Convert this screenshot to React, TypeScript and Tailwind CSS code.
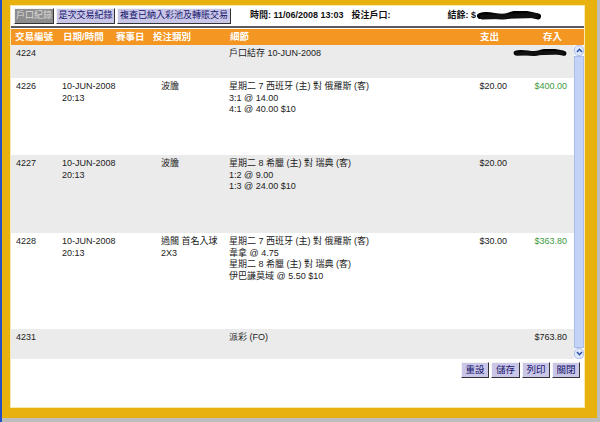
import React from "react";

const font = "font-['Liberation_Sans','Noto_Sans_CJK_TC',sans-serif]";

type Row = {
  id: string;
  date?: string[];
  type?: string[];
  details: string[];
  out?: string;
  inn?: React.ReactNode;
  green?: boolean;
  h: string;
  bg: string;
};

const Scribble: React.FC<{ w: number; h: number }> = ({ w, h }) => (
  <svg width={w} height={h} viewBox={`0 0 ${w} ${h}`}>
    <path
      d={`M3 ${h / 2} C ${w * 0.2} ${h * 0.15}, ${w * 0.35} ${h * 0.85}, ${w * 0.5} ${h * 0.45} S ${w * 0.8} ${h * 0.3}, ${w - 3} ${h * 0.55}`}
      stroke="#000"
      strokeWidth={h * 0.6}
      strokeLinecap="round"
      fill="none"
    />
    <path
      d={`M${w * 0.08} ${h * 0.6} L ${w * 0.92} ${h * 0.45}`}
      stroke="#111"
      strokeWidth={h * 0.5}
      strokeLinecap="round"
    />
  </svg>
);

const rows: Row[] = [
  {
    id: "4224",
    details: ["戶口結存 10-JUN-2008"],
    inn: <Scribble w={54} h={8} />,
    h: "h-[33px]",
    bg: "bg-[#ebebeb]",
  },
  {
    id: "4226",
    date: ["10-JUN-2008", "20:13"],
    type: ["波膽"],
    details: ["星期二 7 西班牙 (主) 對 俄羅斯 (客)", "3:1 @ 14.00", "4:1 @ 40.00 $10"],
    out: "$20.00",
    inn: "$400.00",
    green: true,
    h: "h-[77px]",
    bg: "bg-white",
  },
  {
    id: "4227",
    date: ["10-JUN-2008", "20:13"],
    type: ["波膽"],
    details: ["星期二 8 希臘 (主) 對 瑞典 (客)", "1:2 @ 9.00", "1:3 @ 24.00 $10"],
    out: "$20.00",
    h: "h-[78px]",
    bg: "bg-[#ebebeb]",
  },
  {
    id: "4228",
    date: ["10-JUN-2008", "20:13"],
    type: ["過關 首名入球", "2X3"],
    details: [
      "星期二 7 西班牙 (主) 對 俄羅斯 (客)",
      "韋拿 @ 4.75",
      "星期二 8 希臘 (主) 對 瑞典 (客)",
      "伊巴謙莫域 @ 5.50 $10",
    ],
    out: "$30.00",
    inn: "$363.80",
    green: true,
    h: "h-[96px]",
    bg: "bg-white",
  },
  {
    id: "4231",
    details: ["派彩 (FO)"],
    inn: "$763.80",
    h: "h-[30px]",
    bg: "bg-[#ebebeb]",
  },
];

const Btn: React.FC<{ label: string; disabled?: boolean; w: string; big?: boolean }> = ({ label, disabled, w, big }) => (
  <div
    className={`${w} flex h-[16px] items-center justify-center whitespace-nowrap border border-t-[#f4f4f4] border-l-[#f4f4f4] border-r-[#333] border-b-[#333] ${
      big ? "text-[9.5px]" : "text-[9px]"
    } ${disabled ? "bg-[#8d8d8d] text-[#dcdcdc]" : "bg-[#c9c6e8] text-[#14146a]"}`}
  >
    {label}
  </div>
);

const ScrollArrow: React.FC<{ up?: boolean }> = ({ up }) => (
  <div className="flex h-[11px] w-[10px] items-center justify-center rounded-sm border border-[#b3c3ea] bg-[#dde6fb]">
    <svg width="7" height="5" viewBox="0 0 7 5">
      <path d={up ? "M1 4 L3.5 1.2 L6 4" : "M1 1 L3.5 3.8 L6 1"} stroke="#2a4aa8" strokeWidth="1.4" fill="none" />
    </svg>
  </div>
);

export default function App() {
  return (
    <div className={`${font} h-[422px] w-[600px] overflow-hidden border-l-[2px] border-[#2350c6] bg-[#bdbdbd] pr-[3px] pb-[4px]`}>
      <div className="h-full border-t-[5px] border-l-[8px] border-r-[12px] border-b-[10px] border-[#e8b10d] bg-white">
        <div className="flex h-full flex-col border border-[#f7e9b0] bg-white">
          {/* top bar */}
          <div className="flex h-[20px] items-center pl-[3px] text-[9px] text-[#111]">
            <div className="flex gap-[2px]">
              <Btn label="戶口紀錄" disabled w="w-[40px]" />
              <Btn label="是次交易紀錄" w="w-[59px]" />
              <Btn label="複查已納入彩池及轉賬交易" w="w-[114px]" />
            </div>
            <div className="ml-[19px] font-bold">時間: 11/06/2008 13:03</div>
            <div className="ml-[8px] font-bold">投注戶口:</div>
            <div className="ml-[57px] flex items-center font-bold">
              結餘: $
              <span className="ml-[1px]">
                <Scribble w={64} h={10} />
              </span>
            </div>
          </div>
          <div className="h-[2px] w-full bg-[#5a5a5a]" />
          {/* header */}
          <div className="mt-[1px] flex h-[16px] items-center bg-[#f49622] pl-[4px] text-[9.5px] font-bold text-white">
            <div className="w-[48px]">交易編號</div>
            <div className="w-[53px]">日期/時間</div>
            <div className="w-[37px]">賽事日</div>
            <div className="w-[77px]">投注類別</div>
            <div className="w-[250px]">細節</div>
            <div className="w-[63px]">支出</div>
            <div>存入</div>
          </div>
          {/* rows + scrollbar */}
          <div className="flex">
            <div className="flex-1 text-[9px] leading-[11.5px] text-[#222]">
              {rows.map((r) => (
                <div key={r.id} className={`flex pt-[3px] pl-[5px] ${r.h} ${r.bg}`}>
                  <div className="w-[46px]">{r.id}</div>
                  <div className="w-[99px]">
                    {r.date?.map((d) => (
                      <div key={d}>{d}</div>
                    ))}
                  </div>
                  <div className="w-[68px]">
                    {r.type?.map((d) => (
                      <div key={d}>{d}</div>
                    ))}
                  </div>
                  <div className="w-[222px]">
                    {r.details.map((d, i) => (
                      <div key={i}>{d}</div>
                    ))}
                  </div>
                  <div className="w-[56px] text-right">{r.out}</div>
                  <div className={`w-[60px] text-right ${r.green ? "text-[#3d9b3d]" : ""}`}>
                    {typeof r.inn === "string" ? r.inn : <div className="flex justify-end pt-[1px]">{r.inn}</div>}
                  </div>
                </div>
              ))}
            </div>
            <div className="flex w-[10px] flex-col bg-white">
              <ScrollArrow up />
              <div className="flex-1 border border-[#a9bcea] bg-[#c3d3f8]" />
              <ScrollArrow />
            </div>
          </div>
          {/* bottom buttons */}
          <div className="mt-[3px] flex justify-end gap-[2px] pr-[4px]">
            <Btn label="重設" w="w-[28px]" big />
            <Btn label="儲存" w="w-[29px]" big />
            <Btn label="列印" w="w-[28px]" big />
            <Btn label="關閉" w="w-[28px]" big />
          </div>
        </div>
      </div>
    </div>
  );
}
